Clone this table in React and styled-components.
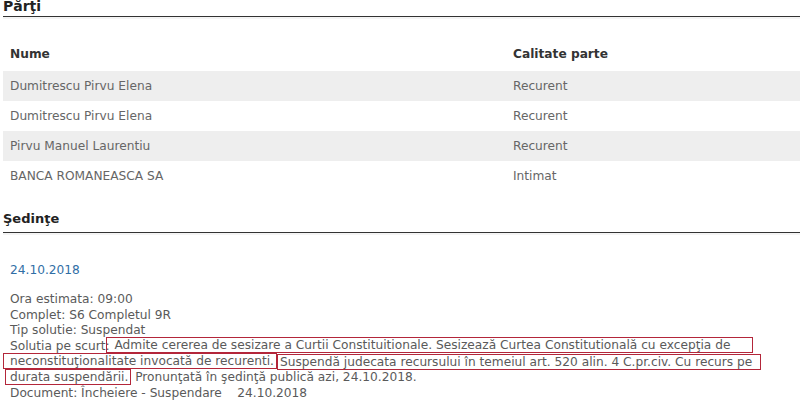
import React from "react";
import styled, { createGlobalStyle } from "styled-components";

const Global = createGlobalStyle`
  html, body { margin: 0; padding: 0; background: #fff; }
  body { font-family: "DejaVu Sans", Verdana, sans-serif; overflow: hidden; }
`;

const Page = styled.div`
  width: 797px;
  margin-left: 3px;
`;

const SectionTitle = styled.h3`
  margin: ${(p) => p.$top}px 0 0 0;
  font-size: ${(p) => p.$size}px;
  font-weight: bold;
  line-height: 20px;
  color: #222;
  padding: 0 0 ${(p) => p.$pb}px 0;
  border-bottom: 1px solid #333;
  box-shadow: 0 2px 0 #f4f4f4;
`;

const Table = styled.div`
  display: flex;
  flex-direction: column;
  margin-top: 20px;
`;

const Row = styled.div`
  display: grid;
  grid-template-columns: 503px 1fr;
  height: ${(p) => (p.$head ? 34 : 30)}px;
  align-items: center;
  background: ${(p) => (p.$shade ? "#eeeeee" : "transparent")};
  color: ${(p) => (p.$head ? "#333" : "#666")};
  font-weight: ${(p) => (p.$head ? "bold" : "normal")};
  font-size: 12.2px;
`;

const Cell = styled.div`
  padding-left: 7px;
  white-space: nowrap;
`;

const DateLink = styled.div`
  margin: 29px 0 0 7px;
  line-height: 16px;
  font-size: 12.2px;
  color: #2f6ea5;
`;

const Details = styled.div`
  margin: 14px 0 0 7px;
  font-size: 12.2px;
  line-height: 15.6px;
  color: #5a5a5a;
`;

const Line = styled.div`
  white-space: pre;
  height: 15.6px;
`;

const Mark = styled.span`
  border: 1px solid #b3263a;
  padding: 0 ${(p) => p.$pr}px 0 ${(p) => p.$pl}px;
  margin-left: ${(p) => -p.$ml}px;
  position: relative;
  top: ${(p) => p.$dy || 0}px;
`;

const rows = [
  ["Dumitrescu Pirvu Elena", "Recurent"],
  ["Dumitrescu Pirvu Elena", "Recurent"],
  ["Pirvu Manuel Laurentiu", "Recurent"],
  ["BANCA ROMANEASCA SA", "Intimat"],
];

export default function App() {
  return (
    <Page>
      <Global />
      <SectionTitle $top={-4} $size={14} $pb={0}>Părţi</SectionTitle>
      <Table>
        <Row $head>
          <Cell>Nume</Cell>
          <Cell>Calitate parte</Cell>
        </Row>
        {rows.map((r, i) => (
          <Row key={i} $shade={i % 2 === 0}>
            <Cell>{r[0]}</Cell>
            <Cell>{r[1]}</Cell>
          </Row>
        ))}
      </Table>
      <SectionTitle $top={18} $size={13} $pb={3}>Şedinţe</SectionTitle>
      <DateLink>24.10.2018</DateLink>
      <Details>
        <Line>Ora estimata: 09:00</Line>
        <Line>Complet: S6 Completul 9R</Line>
        <Line>Tip solutie: Suspendat</Line>
        <Line>
          Solutia pe scurt:
          <Mark $ml={4} $pl={4} $pr={22} $dy={-1}>
            {" "}Admite cererea de sesizare a Curtii Constituitionale. Sesizează Curtea Constitutională cu excepţia de
          </Mark>
        </Line>
        <Line>
          <Mark $ml={7} $pl={6} $pr={2}>neconstituţionalitate invocată de recurenti.</Mark>
          <Mark $ml={0} $pl={2} $pr={8} $dy={1}>Suspendă judecata recursului în temeiul art. 520 alin. 4 C.pr.civ. Cu recurs pe</Mark>
        </Line>
        <Line>
          <Mark $ml={5} $pl={4} $pr={2}>durata suspendării.</Mark> Pronunţată în şedinţă publică azi, 24.10.2018.
        </Line>
        <Line>Document: Încheiere - Suspendare    24.10.2018</Line>
      </Details>
    </Page>
  );
}
